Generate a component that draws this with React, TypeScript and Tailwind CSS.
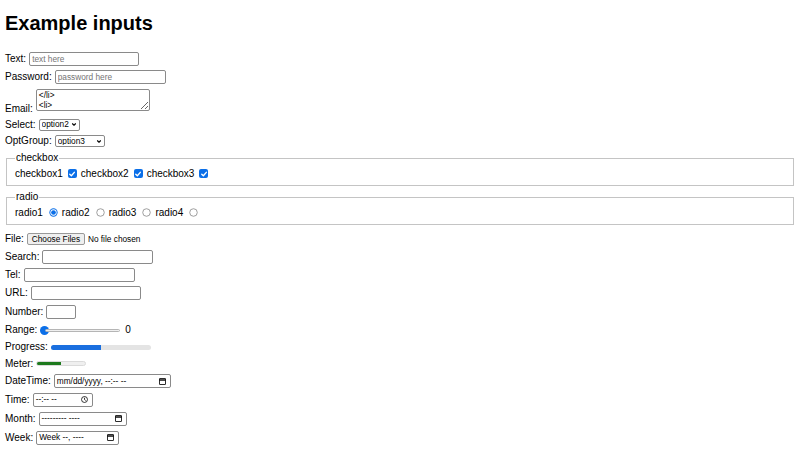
import type { ReactNode } from "react";

const inputCls =
  "h-[14px] rounded-[2px] border border-[#8a8a8a] bg-white px-[2px] text-[8.3px] leading-none text-black outline-none placeholder:text-[#757575]";

const fakeCls =
  "flex h-[14px] items-center justify-between rounded-[2px] border border-[#8a8a8a] bg-white pl-[2px] pr-[4px] text-[8.3px] leading-none";

function Row({ label, cls = "h-[18px]", children }: { label: string; cls?: string; children: ReactNode }) {
  return (
    <div className={`flex items-center gap-[3px] ${cls}`}>
      <span>{label}</span>
      {children}
    </div>
  );
}

const Chevron = () => (
  <svg viewBox="0 0 10 10" className="pointer-events-none absolute right-[3px] top-[3.5px] h-[5px] w-[6px]" fill="none" stroke="black" strokeWidth="2.2" strokeLinecap="round" strokeLinejoin="round">
    <path d="M2 3.5 5 6.5 8 3.5" />
  </svg>
);

const CalendarIcon = () => (
  <svg viewBox="0 0 8 8" className="h-[7px] w-[7px]" fill="none" stroke="black" strokeWidth="1">
    <rect x="0.5" y="0.5" width="7" height="7" rx="0.6" />
    <path d="M0.5 2.3h7" strokeWidth="1.6" />
  </svg>
);

const ClockIcon = () => (
  <svg viewBox="0 0 8 8" className="h-[7px] w-[7px]" fill="none" stroke="black" strokeWidth="0.9">
    <circle cx="4" cy="4" r="3.4" />
    <path d="M4 2v2.1l1.4 1" />
  </svg>
);

function Select({ value, w }: { value: string; w: string }) {
  return (
    <span className="relative inline-flex">
      <select
        defaultValue={value}
        className={`h-[12px] appearance-none rounded-[2px] border border-[#8a8a8a] bg-white pl-[2px] text-[8.3px] leading-none text-black outline-none ${w}`}
      >
        <option>option1</option>
        <option>option2</option>
        <option>option3</option>
      </select>
      <Chevron />
    </span>
  );
}

const CheckBox = () => (
  <span className="ml-[5px] mr-[4px] grid h-[9px] w-[9px] place-items-center rounded-[2px] bg-[#0b6fe8]">
    <svg viewBox="0 0 10 10" className="h-[8px] w-[8px]" fill="none" stroke="white" strokeWidth="1.7" strokeLinecap="round" strokeLinejoin="round">
      <path d="M2.2 5.2 4.2 7.2 7.9 2.9" />
    </svg>
  </span>
);

const Radio = ({ on }: { on?: boolean }) => (
  <svg viewBox="0 0 10 10" className="ml-[6px] mr-[4px] h-[9px] w-[9px]">
    {on ? (
      <>
        <circle cx="5" cy="5" r="4.6" fill="#0b6fe8" />
        <circle cx="5" cy="5" r="3.5" fill="white" />
        <circle cx="5" cy="5" r="2.6" fill="#0b6fe8" />
      </>
    ) : (
      <circle cx="5" cy="5" r="4.2" fill="white" stroke="#8a8a8a" strokeWidth="0.9" />
    )}
  </svg>
);

export default function App() {
  return (
    <div className="h-[450px] w-[800px] overflow-hidden bg-white px-[5px] font-['Liberation_Sans',Arial,sans-serif] text-[10px] leading-[12px] text-black">
      <h1 className="mt-[12px] text-[20px] font-bold leading-[23px]">Example inputs</h1>

      <div className="mt-[15px]">
        <Row label="Text:">
          <input className={`${inputCls} w-[110px]`} placeholder="text here" />
        </Row>
        <Row label="Password:">
          <input type="password" className={`${inputCls} w-[111px]`} placeholder="password here" />
        </Row>
        <div className="flex h-[30px] items-end gap-[3px] pb-[1px]">
          <span>Email:</span>
          <textarea
            className="mb-[4px] h-[22px] w-[114px] resize rounded-[2px] border border-[#8a8a8a] bg-white px-[2px] pt-[1px] text-[8.3px] leading-[9.5px] outline-none"
            defaultValue={"</li>\n<li>"}
          />
        </div>
        <Row label="Select:" cls="h-[17px]">
          <Select value="option2" w="w-[41px]" />
        </Row>
        <Row label="OptGroup:" cls="h-[16px]">
          <Select value="option3" w="w-[50px]" />
        </Row>

        <fieldset className="mx-[1px] mt-[3px] border border-[#c4c4c4] px-[8px] pb-[5px]">
          <legend className="px-[1px] leading-[12px]">checkbox</legend>
          <div className="flex h-[16px] items-center pt-[3px]">
            <span>checkbox1</span>
            <CheckBox />
            <span>checkbox2</span>
            <CheckBox />
            <span>checkbox3</span>
            <CheckBox />
          </div>
        </fieldset>

        <fieldset className="mx-[1px] mt-[5px] border border-[#c4c4c4] px-[8px] pb-[5px]">
          <legend className="px-[1px] leading-[12px]">radio</legend>
          <div className="flex h-[16px] items-center pt-[3px]">
            <span>radio1</span>
            <Radio on />
            <span>radio2</span>
            <Radio />
            <span>radio3</span>
            <Radio />
            <span>radio4</span>
            <Radio />
          </div>
        </fieldset>

        <div className="mt-[5px]">
          <Row label="File:">
            <button className="h-[12px] w-[58px] rounded-[2px] border border-[#999999] bg-[#efefef] text-[8.3px] leading-none">
              Choose Files
            </button>
            <span className="text-[8.3px]">No file chosen</span>
          </Row>
          <Row label="Search:">
            <input type="search" className={`${inputCls} w-[111px]`} />
          </Row>
          <Row label="Tel:">
            <input type="tel" className={`${inputCls} w-[111px]`} />
          </Row>
          <Row label="URL:">
            <input type="url" className={`${inputCls} w-[110px]`} />
          </Row>
          <Row label="Number:" cls="h-[19px]">
            <input type="number" className={`${inputCls} w-[30px]`} />
          </Row>
          <Row label="Range:">
            <div className="flex h-[10px] w-[80px] items-center">
              <span className="h-[9px] w-[9px] shrink-0 rounded-full bg-[#0b6fe8]" />
              <span className="-ml-[4px] h-[3px] flex-1 rounded-full border border-[#b5b5b5] bg-[#efefef]" />
            </div>
            <span className="ml-[2px]">0</span>
          </Row>
          <Row label="Progress:" cls="h-[16px]">
            <div className="flex h-[5px] w-[100px] overflow-hidden rounded-full bg-[#e4e4e4]">
              <span className="w-1/2 bg-[#1a6fdf]" />
            </div>
          </Row>
          <Row label="Meter:" cls="h-[17px]">
            <div className="flex h-[5px] w-[50px] overflow-hidden rounded-full border border-[#dadada] bg-[#efefef]">
              <span className="w-1/2 bg-[#1d7a1d]" />
            </div>
          </Row>
          <Row label="DateTime:">
            <div className={`${fakeCls} w-[117px]`}>
              <span>mm/dd/yyyy, --:-- --</span>
              <CalendarIcon />
            </div>
          </Row>
          <Row label="Time:" cls="h-[19px]">
            <div className={`${fakeCls} w-[60px]`}>
              <span>--:-- --</span>
              <ClockIcon />
            </div>
          </Row>
          <Row label="Month:" cls="h-[19px]">
            <div className={`${fakeCls} w-[88px]`}>
              <span>--------- ----</span>
              <CalendarIcon />
            </div>
          </Row>
          <Row label="Week:" cls="h-[19px]">
            <div className={`${fakeCls} w-[83px]`}>
              <span>Week --, ----</span>
              <CalendarIcon />
            </div>
          </Row>
          <Row label="Color:" cls="h-[19px]">
            <div className="h-[14px] w-[30px] rounded-[2px] border border-[#8a8a8a] bg-[#efefef] p-[2px]">
              <div className="h-full w-full bg-black" />
            </div>
          </Row>
        </div>
      </div>
    </div>
  );
}
